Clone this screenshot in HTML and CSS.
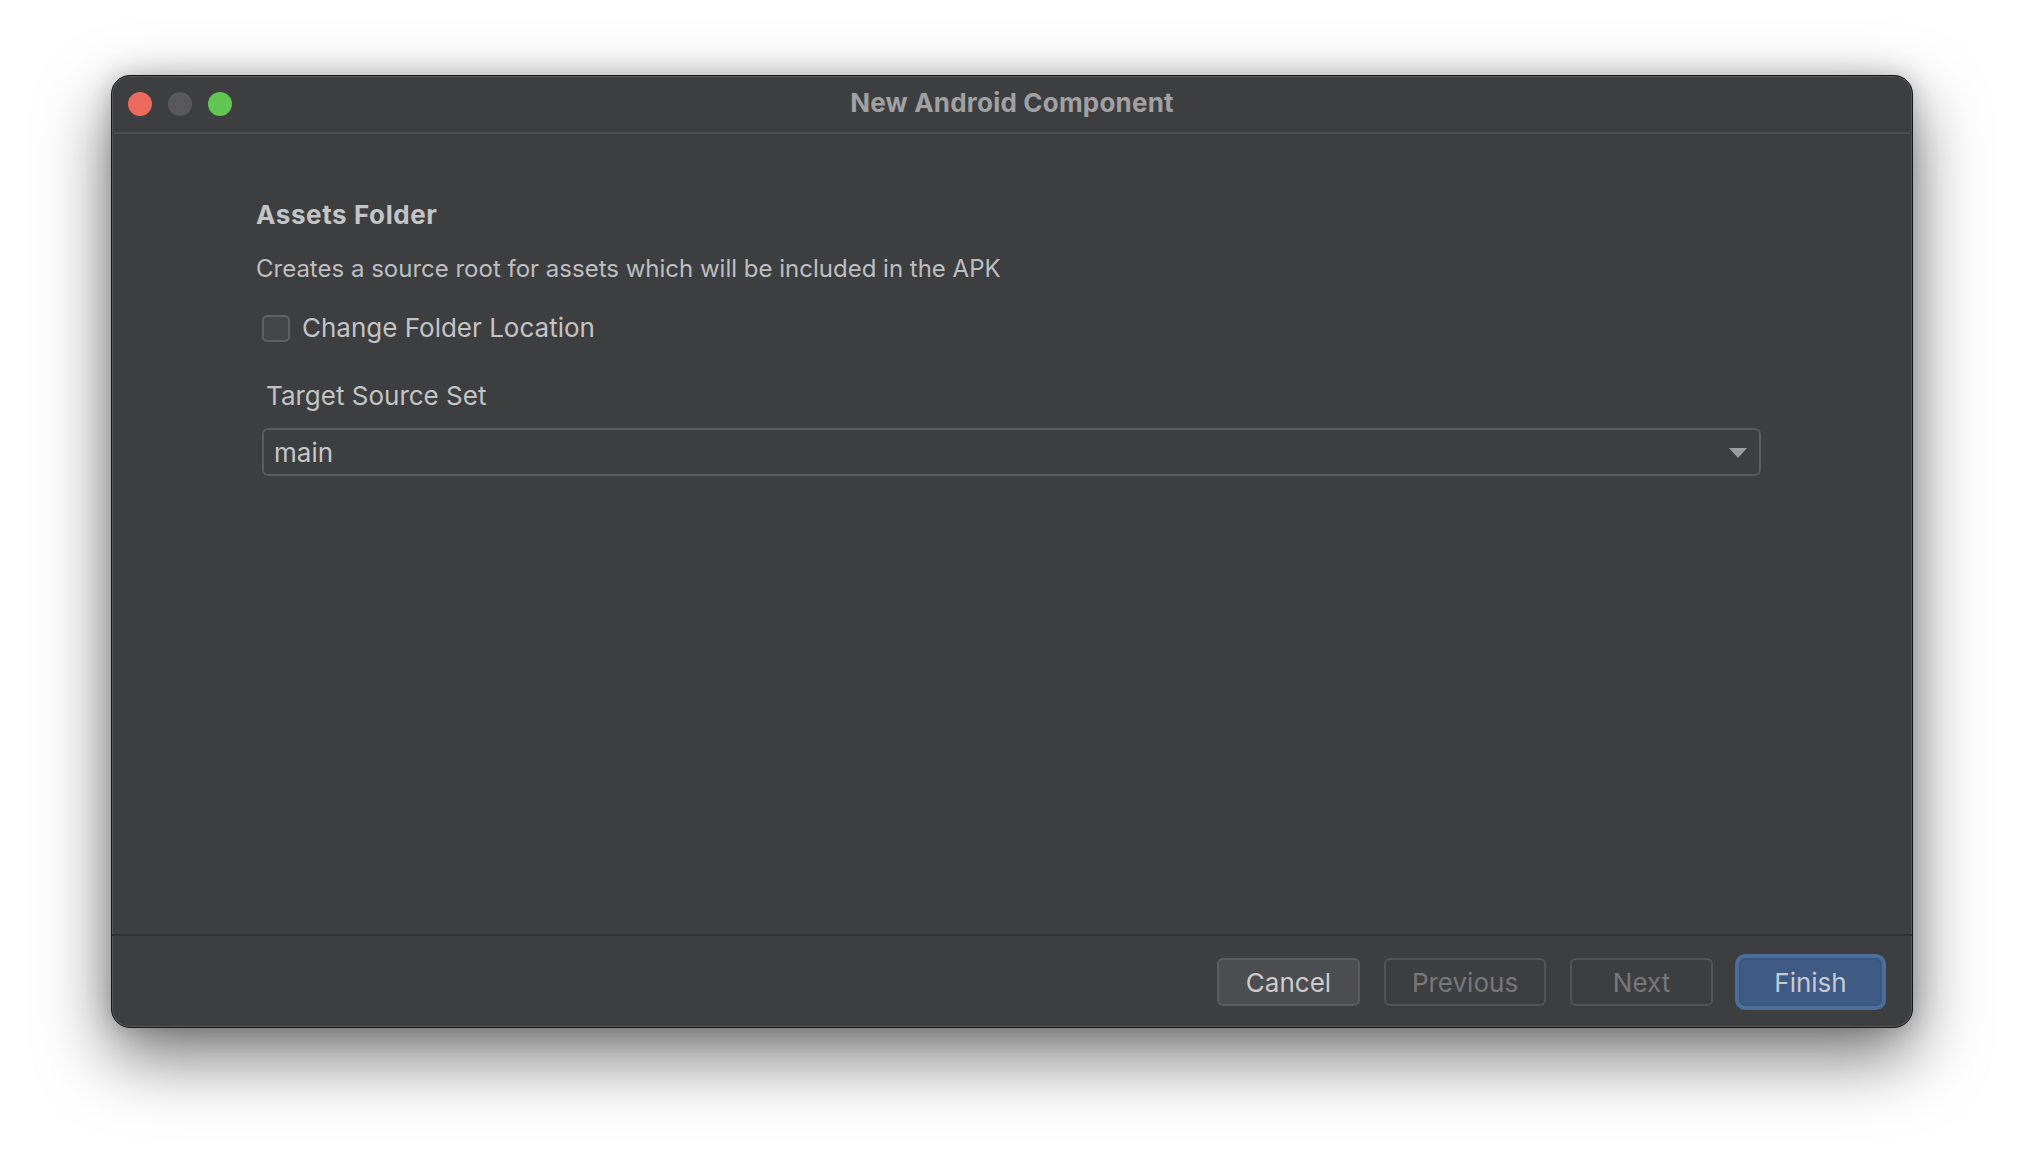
FILE: index.html
```html
<!DOCTYPE html>
<html lang="en">
<head>
    <meta charset="UTF-8">
    <meta name="viewport" content="width=device-width, initial-scale=1.0">
    <title>New Android Component</title>
    <link rel="stylesheet" href="styles.css">
</head>
<body>
    <div class="window">
        <div class="titlebar">
            <div class="lights">
                <span class="light close"></span>
                <span class="light mini"></span>
                <span class="light zoom"></span>
            </div>
            <div class="title">New Android Component</div>
            <div></div>
        </div>

        <main class="content">
            <h2 class="heading">Assets Folder</h2>
            <p class="desc">Creates a source root for assets which will be included in the APK</p>

            <label class="check-row">
                <span class="checkbox"></span>
                <span>Change Folder Location</span>
            </label>

            <div class="field-label">Target Source Set</div>
            <div class="combo">
                <span>main</span>
                <svg class="arrow" width="18" height="10" viewBox="0 0 18 10">
                    <path d="M0 0 L18 0 L9 10 Z" fill="#9c9da0"/>
                </svg>
            </div>
        </main>

        <footer class="footer">
            <button class="btn">Cancel</button>
            <button class="btn disabled wide">Previous</button>
            <button class="btn disabled">Next</button>
            <button class="btn primary">Finish</button>
        </footer>
    </div>
</body>
</html>
```

FILE: styles.css
```css
* {
    box-sizing: border-box;
}
body {
    margin: 0;
    padding: 75px 0 0 111px;
    background-color: #ffffff;
    font-family: Inter, 'Noto Sans', sans-serif;
    height: 1176px;
    overflow: hidden;
}
.window {
    width: 1802px;
    height: 953px;
    background-color: #3d3e40;
    border: 1px solid #161617;
    border-radius: 19px;
    box-shadow: inset 0 0 0 1px #58595b, 0 28px 70px rgba(0, 0, 0, 0.55), 0 0 26px rgba(0, 0, 0, 0.2);
    display: flex;
    flex-direction: column;
    overflow: hidden;
}
.titlebar {
    height: 58px;
    border-bottom: 2px solid #4c4d4f;
    display: grid;
    grid-template-columns: 1fr auto 1fr;
    align-items: center;
}
.lights {
    display: flex;
    gap: 16px;
    padding-left: 16px;
}
.light {
    width: 24px;
    height: 24px;
    border-radius: 50%;
}
.close {
    background-color: #ed6a5e;
}
.mini {
    background-color: #59595c;
}
.zoom {
    background-color: #61c554;
}
.title {
    color: #a0a1a3;
    font-weight: 700;
    font-size: 26px;
    letter-spacing: 0.2px;
    padding-bottom: 4px;
}
.content {
    flex: 1;
    padding: 65px 151px 0 144px;
}
.heading {
    margin: 0;
    font-size: 26px;
    line-height: 31px;
    font-weight: 700;
    letter-spacing: 0.6px;
    color: #c3c4c6;
}
.desc {
    margin: 24px 0 0;
    font-size: 24px;
    line-height: 29px;
    color: #bdbec0;
}
.check-row {
    display: flex;
    align-items: center;
    gap: 12px;
    margin: 30px 0 0 6px;
    font-size: 26px;
    line-height: 30px;
    color: #c3c4c6;
}
.checkbox {
    width: 28px;
    height: 27px;
    border: 2px solid #5e6063;
    border-radius: 5px;
    background-color: #43474a;
}
.field-label {
    margin: 38px 0 0 10px;
    font-size: 26px;
    line-height: 30px;
    color: #c3c4c6;
}
.combo {
    margin: 17px 0 0 6px;
    height: 48px;
    border: 2px solid #5a5c5f;
    border-radius: 6px;
    display: flex;
    align-items: center;
    justify-content: space-between;
    padding: 0 12px 0 10px;
    font-size: 26px;
    color: #c6c7c9;
}
.arrow {
    margin-top: 2px;
}
.footer {
    border-top: 2px solid #303133;
    padding: 22px 30px 21px;
    display: flex;
    justify-content: flex-end;
    gap: 24px;
}
.btn {
    height: 48px;
    width: 143px;
    padding: 0;
    border: 2px solid #5b5d60;
    border-radius: 6px;
    background-color: #4b4d50;
    color: #caccce;
    font-family: Inter, 'Noto Sans', sans-serif;
    font-size: 26px;
}
.btn.wide {
    width: 162px;
}
.btn.disabled {
    background-color: transparent;
    border-color: #525457;
    color: #77787b;
}
.btn.primary {
    margin-left: 2px;
    background-color: #3e5a85;
    border-color: #3a5680;
    box-shadow: 0 0 0 4px #4d6d9b;
    color: #c6cad1;
}
```
